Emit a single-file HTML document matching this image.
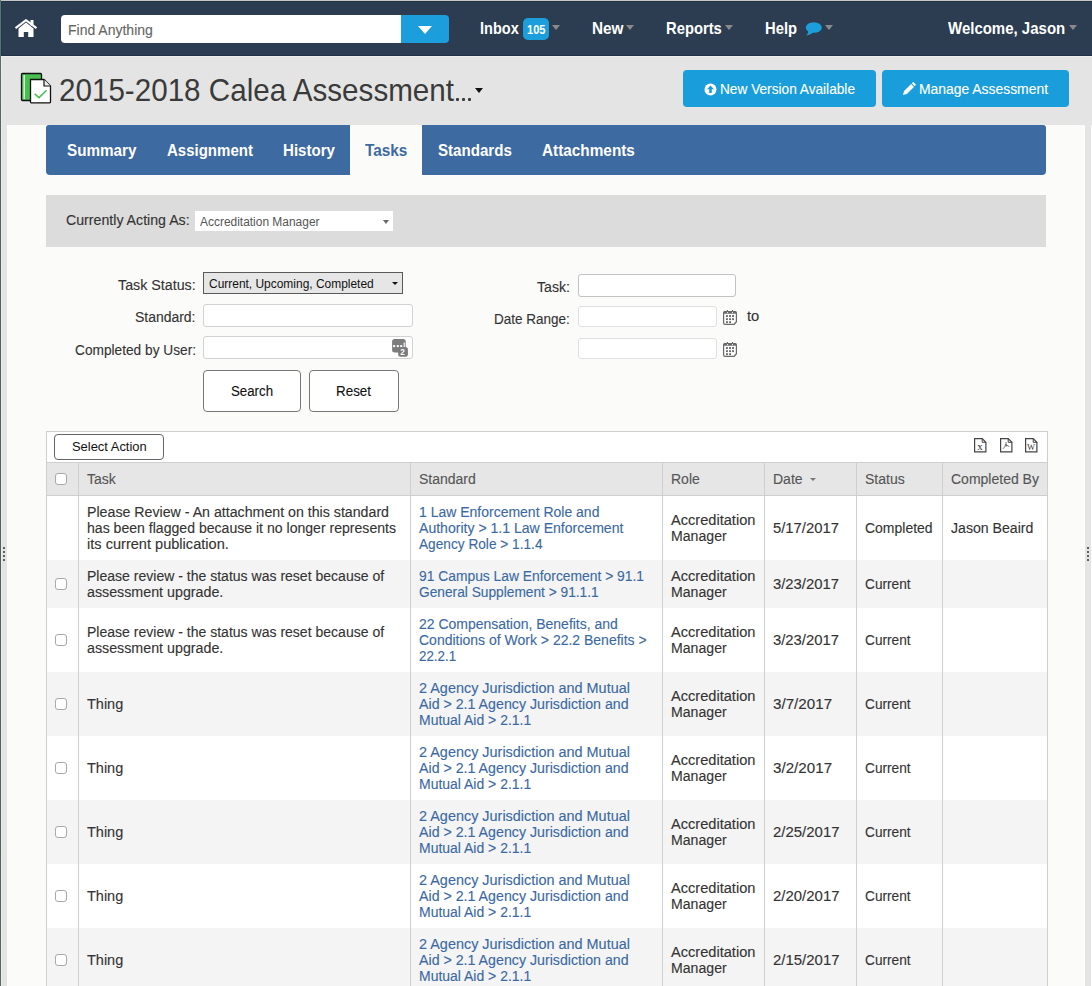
<!DOCTYPE html>
<html><head><meta charset="utf-8"><style>
*{box-sizing:border-box;margin:0;padding:0}
html,body{width:1092px;height:986px;overflow:hidden;background:#e4e4e4;font-family:"Liberation Sans",sans-serif;color:#333}
.a{position:absolute}
.t{position:absolute;white-space:nowrap;line-height:20px;transform-origin:0 0;-webkit-text-stroke:0.12px currentColor}
.caret{position:absolute;width:0;height:0;border-left:4px solid transparent;border-right:4px solid transparent;border-top:5px solid #8a8a8a}
.cb{position:absolute;width:12px;height:12px;border:1px solid #a9a9a9;border-radius:3px;background:#fff}
.dot{position:absolute;width:2px;height:2px;background:#606060}
</style></head><body>
<div class="a" style="left:0px;top:0px;width:1092px;height:1px;background:#c8c5c5"></div>
<div class="a" style="left:1px;top:1px;width:1091px;height:55px;background:#2c3d52"></div>
<div class="a" style="left:1px;top:1px;width:1091px;height:1px;background:#22344a"></div>
<div class="a" style="left:1px;top:55px;width:1091px;height:1px;background:#1f3047"></div>
<div class="a" style="left:1px;top:1px;width:1px;height:55px;background:#25374c"></div>
<div class="a" style="left:1px;top:56px;width:1091px;height:1px;background:#efeeee"></div>
<div class="a" style="left:1px;top:56px;width:1px;height:930px;background:#ebebeb"></div>
<div class="a" style="left:7px;top:125px;width:1078px;height:861px;background:#fbfbfa"></div>
<div class="a" style="left:1091px;top:125px;width:1px;height:861px;background:#fbfbfa"></div>
<div class="a" style="left:0px;top:0px;width:1px;height:986px;background:linear-gradient(#5b7a71,#4a6660 15%,#4b6560 85%,#566c60)"></div>
<svg class="a" style="left:14px;top:19px" width="24" height="19" viewBox="0 0 24 19">
<path d="M1.5 9.2 L12 1.2 L22.5 9.2" stroke="#fff" stroke-width="2.1" fill="none"/>
<path d="M16.5 1 h3 v5.5 h-3z" fill="#fff"/>
<path d="M4.5 9.5 L12 3.6 L19.5 9.5 V18 H14.2 V13 H9.8 V18 H4.5Z" fill="#fff"/></svg>
<div class="a" style="left:61px;top:15px;width:341px;height:28px;background:#fff;border-radius:4px 0 0 4px"></div>
<div class="t" style="left:68px;top:20px;font-size:14px;color:#666;">Find Anything</div>
<div class="a" style="left:401px;top:15px;width:48px;height:28px;background:#1b9edb;border-radius:0 4px 4px 0"></div>
<div class="a" style="left:417.5px;top:26px;width:0;height:0;border-left:7.5px solid transparent;border-right:7.5px solid transparent;border-top:8px solid #fff"></div>
<div class="t" style="left:480px;top:19px;font-size:17px;color:#fff;font-weight:bold;-webkit-text-stroke:0;transform:scaleX(0.8559);">Inbox</div>
<div class="a" style="left:523px;top:18px;width:26px;height:22px;background:#1b9edb;border-radius:5px"></div>
<div class="t" style="left:527px;top:20px;font-size:13px;color:#fff;font-weight:bold;-webkit-text-stroke:0;transform:scaleX(0.8529);">105</div>
<div class="caret" style="left:552px;top:25px"></div>
<div class="t" style="left:591.5px;top:19px;font-size:17px;color:#fff;font-weight:bold;-webkit-text-stroke:0;transform:scaleX(0.9012);">New</div>
<div class="caret" style="left:626px;top:25px"></div>
<div class="t" style="left:665.6px;top:19px;font-size:17px;color:#fff;font-weight:bold;-webkit-text-stroke:0;transform:scaleX(0.8687);">Reports</div>
<div class="caret" style="left:725px;top:25px"></div>
<div class="t" style="left:764.5px;top:19px;font-size:17px;color:#fff;font-weight:bold;-webkit-text-stroke:0;transform:scaleX(0.8686);">Help</div>
<svg class="a" style="left:805px;top:22px" width="17" height="14" viewBox="0 0 17 14"><ellipse cx="8.8" cy="5.5" rx="8" ry="5.3" fill="#1b9edb"/><path d="M3.5 8 Q3.5 12 1.2 13.8 Q6 13 8.5 10z" fill="#1b9edb"/></svg>
<div class="caret" style="left:825px;top:25px"></div>
<div class="t" style="left:948.4px;top:19px;font-size:17px;color:#fff;font-weight:bold;-webkit-text-stroke:0;transform:scaleX(0.8818);">Welcome, Jason</div>
<div class="caret" style="left:1069px;top:25px"></div>
<svg class="a" style="left:20px;top:72px" width="32" height="32" viewBox="0 0 32 32">
<rect x="1.5" y="1.5" width="20" height="27" rx="1" fill="#48bf50" stroke="#111" stroke-width="1.3"/>
<rect x="3.5" y="3" width="1.5" height="24" fill="#d9f3db"/>
<path d="M10.5 7.5 H24 L30.5 14 V30 Q30.5 30.8 29.7 30.8 H11.3 Q10.5 30.8 10.5 30 Z" fill="#fff" stroke="#111" stroke-width="1.3"/>
<path d="M24 7.5 V14 H30.5" fill="#eee" stroke="#111" stroke-width="1.2"/>
<path d="M14.7 21.8 L19 25.6 L26.6 18.2" stroke="#4cc152" stroke-width="1.6" fill="none"/></svg>
<div class="t" style="left:58.5px;top:80px;font-size:32px;color:#3a3a3a;-webkit-text-stroke:0;transform:scaleX(0.9252);">2015-2018 Calea Assessment</div>
<div class="a" style="left:455.8px;top:97.6px;width:3.3px;height:3.3px;background:#3a3a3a;border-radius:1px"></div>
<div class="a" style="left:461.6px;top:97.6px;width:3.3px;height:3.3px;background:#3a3a3a;border-radius:1px"></div>
<div class="a" style="left:467.9px;top:97.6px;width:3.3px;height:3.3px;background:#3a3a3a;border-radius:1px"></div>
<div class="a" style="left:474.5px;top:88px;width:0;height:0;border-left:4.25px solid transparent;border-right:4.25px solid transparent;border-top:5px solid #111"></div>
<div class="a" style="left:683px;top:70px;width:193px;height:37px;background:#1a9ddb;border-radius:4px"></div>
<svg class="a" style="left:704px;top:83px" width="13" height="13" viewBox="0 0 13 13"><circle cx="6.5" cy="6.5" r="6" fill="#fff"/><path d="M6.5 2.5 L10 6.3 H7.8 V10 H5.2 V6.3 H3z" fill="#1a9ddb"/></svg>
<div class="t" style="left:719.8px;top:79px;font-size:15px;color:#fff;transform:scaleX(0.9112);">New Version Available</div>
<div class="a" style="left:882px;top:70px;width:187px;height:37px;background:#1a9ddb;border-radius:4px"></div>
<svg class="a" style="left:902px;top:82px" width="14" height="14" viewBox="0 0 14 14"><g transform="rotate(45 7 7)"><path d="M5 -1 H9 V1 H5Z M5 2 H9 V12 L7 15.5 L5 12Z" fill="#fff"/></g></svg>
<div class="t" style="left:918.8px;top:79px;font-size:15px;color:#fff;transform:scaleX(0.9264);">Manage Assessment</div>
<div class="a" style="left:46px;top:125px;width:1000px;height:50px;background:#3d6aa1;border-radius:3px 3px 4px 4px"></div>
<div class="a" style="left:350px;top:125px;width:72px;height:50px;background:#fbfbfa"></div>
<div class="t" style="left:67px;top:141px;font-size:17px;color:#fff;font-weight:bold;-webkit-text-stroke:0;transform:scaleX(0.8970);">Summary</div>
<div class="t" style="left:166.8px;top:141px;font-size:17px;color:#fff;font-weight:bold;-webkit-text-stroke:0;transform:scaleX(0.8829);">Assignment</div>
<div class="t" style="left:283px;top:141px;font-size:17px;color:#fff;font-weight:bold;-webkit-text-stroke:0;transform:scaleX(0.8861);">History</div>
<div class="t" style="left:437.6px;top:141px;font-size:17px;color:#fff;font-weight:bold;-webkit-text-stroke:0;transform:scaleX(0.8877);">Standards</div>
<div class="t" style="left:541.6px;top:141px;font-size:17px;color:#fff;font-weight:bold;-webkit-text-stroke:0;transform:scaleX(0.9022);">Attachments</div>
<div class="t" style="left:365px;top:141px;font-size:17px;color:#3d6aa1;font-weight:bold;-webkit-text-stroke:0;transform:scaleX(0.9032);">Tasks</div>
<div class="a" style="left:46px;top:195px;width:1000px;height:52px;background:#dcdcdc"></div>
<div class="t" style="left:66.4px;top:210px;font-size:14px;color:#333;transform:scaleX(1.0117);">Currently Acting As:</div>
<div class="a" style="left:195px;top:211px;width:198px;height:20px;background:#fff"></div>
<div class="t" style="left:199.5px;top:212px;font-size:12px;color:#555;-webkit-text-stroke:0;transform:scaleX(0.9953);">Accreditation Manager</div>
<div class="a" style="left:382.5px;top:219.5px;width:0;height:0;border-left:3.0px solid transparent;border-right:3.0px solid transparent;border-top:4px solid #6a6a6a"></div>
<div class="t" style="left:117.99999999999999px;top:274.5px;font-size:14px;color:#333;transform:scaleX(1.0189);">Task Status:</div>
<div class="a" style="left:203px;top:272px;width:200px;height:22px;background:#e6e6e6;border:1px solid #5a5a5a"></div>
<div class="t" style="left:208.5px;top:274px;font-size:12px;color:#111;-webkit-text-stroke:0;transform:scaleX(0.9957);">Current, Upcoming, Completed</div>
<div class="a" style="left:391.5px;top:282px;width:0;height:0;border-left:3.0px solid transparent;border-right:3.0px solid transparent;border-top:3.5px solid #111"></div>
<div class="t" style="left:135.2px;top:307px;font-size:14px;color:#333;transform:scaleX(0.9965);">Standard:</div>
<div class="a" style="left:203px;top:304px;width:210px;height:23px;background:#fff;border:1px solid #d2d2d2;border-radius:3px"></div>
<div class="t" style="left:74.69999999999999px;top:339.5px;font-size:14px;color:#333;transform:scaleX(0.9780);">Completed by User:</div>
<div class="a" style="left:203px;top:336px;width:210px;height:23px;background:#fff;border:1px solid #d2d2d2;border-radius:3px"></div>
<svg class="a" style="left:391px;top:339px" width="18" height="19" viewBox="0 0 18 19">
<rect x="1.1" y="0.1" width="13.6" height="13.5" rx="2.5" fill="#7d7d7d"/>
<rect x="7.2" y="7.9" width="9.7" height="9.8" rx="2.5" fill="#7a7a7a"/>
<rect x="2.1" y="6.1" width="2" height="2" fill="#fff"/><rect x="5.8" y="6.1" width="2" height="2" fill="#fff"/><rect x="9.2" y="6.1" width="2" height="2" fill="#fff"/><rect x="12.6" y="3.5" width="1.3" height="4.6" fill="#eee"/>
<text x="11.6" y="16.2" font-size="8.2" font-weight="bold" fill="#fff" text-anchor="middle" font-family="Liberation Sans">2</text></svg>
<div class="a" style="left:203px;top:370px;width:98px;height:42px;background:#fff;border:1px solid #777;border-radius:4px"></div>
<div class="t" style="left:231px;top:381px;font-size:14px;color:#111;transform:scaleX(0.9468);">Search</div>
<div class="a" style="left:309px;top:370px;width:90px;height:42px;background:#fff;border:1px solid #777;border-radius:4px"></div>
<div class="t" style="left:336px;top:381px;font-size:14px;color:#111;transform:scaleX(0.9570);">Reset</div>
<div class="t" style="left:537px;top:277px;font-size:14px;color:#333;transform:scaleX(1.0099);">Task:</div>
<div class="a" style="left:578px;top:274px;width:158px;height:23px;background:#fff;border:1px solid #c2c2c2;border-radius:3px"></div>
<div class="t" style="left:494.3px;top:309px;font-size:14px;color:#333;transform:scaleX(0.9630);">Date Range:</div>
<div class="a" style="left:578px;top:306px;width:139px;height:21px;background:#fff;border:1px solid #e0e0e0;border-radius:3px"></div>
<div class="a" style="left:578px;top:338px;width:139px;height:21px;background:#fff;border:1px solid #e0e0e0;border-radius:3px"></div>
<div class="t" style="left:746.5px;top:306px;font-size:14px;color:#333;transform:scaleX(1.0535);">to</div>
<svg class="a" style="left:723px;top:310px" width="15" height="16" viewBox="0 0 15 16">
<path d="M2 1.6 H12 Q13.4 1.6 13.4 3 V11.8 L11.2 14.3 H2 Q0.6 14.3 0.6 12.9 V3 Q0.6 1.6 2 1.6Z" fill="#fff" stroke="#6a6a6a" stroke-width="1.2"/>
<rect x="0.6" y="1.3" width="12.8" height="2.5" rx="1" fill="#6a6a6a"/>
<rect x="4" y="0" width="1" height="2.2" fill="#6a6a6a"/><rect x="9" y="0" width="1" height="2.2" fill="#6a6a6a"/>
<circle cx="4.5" cy="2.6" r="0.6" fill="#fff"/><circle cx="9.5" cy="2.6" r="0.6" fill="#fff"/>
<path d="M13.4 11.4 L11 14.3 Q11.1 12.1 13.4 11.4Z" fill="#6a6a6a"/>
<g fill="#6a6a6a"><rect x="3" y="5.1" width="1.9" height="1.9"/><rect x="6.1" y="5.1" width="1.9" height="1.9"/><rect x="9.1" y="5.1" width="1.9" height="1.9"/>
<rect x="3" y="8.2" width="1.9" height="1.9"/><rect x="6.1" y="8.2" width="1.9" height="1.9"/><rect x="9.1" y="8.2" width="1.9" height="1.9"/>
<rect x="3" y="11.2" width="1.9" height="1.9"/><rect x="6.1" y="11.2" width="1.9" height="1.9"/></g></svg>
<svg class="a" style="left:723px;top:342px" width="15" height="16" viewBox="0 0 15 16">
<path d="M2 1.6 H12 Q13.4 1.6 13.4 3 V11.8 L11.2 14.3 H2 Q0.6 14.3 0.6 12.9 V3 Q0.6 1.6 2 1.6Z" fill="#fff" stroke="#6a6a6a" stroke-width="1.2"/>
<rect x="0.6" y="1.3" width="12.8" height="2.5" rx="1" fill="#6a6a6a"/>
<rect x="4" y="0" width="1" height="2.2" fill="#6a6a6a"/><rect x="9" y="0" width="1" height="2.2" fill="#6a6a6a"/>
<circle cx="4.5" cy="2.6" r="0.6" fill="#fff"/><circle cx="9.5" cy="2.6" r="0.6" fill="#fff"/>
<path d="M13.4 11.4 L11 14.3 Q11.1 12.1 13.4 11.4Z" fill="#6a6a6a"/>
<g fill="#6a6a6a"><rect x="3" y="5.1" width="1.9" height="1.9"/><rect x="6.1" y="5.1" width="1.9" height="1.9"/><rect x="9.1" y="5.1" width="1.9" height="1.9"/>
<rect x="3" y="8.2" width="1.9" height="1.9"/><rect x="6.1" y="8.2" width="1.9" height="1.9"/><rect x="9.1" y="8.2" width="1.9" height="1.9"/>
<rect x="3" y="11.2" width="1.9" height="1.9"/><rect x="6.1" y="11.2" width="1.9" height="1.9"/></g></svg>
<div class="a" style="left:46px;top:431px;width:1002px;height:561px;background:#fff;border:1px solid #cfcfcf"></div>
<div class="a" style="left:54px;top:434px;width:110px;height:26px;background:#fff;border:1px solid #666;border-radius:4px"></div>
<div class="t" style="left:71.5px;top:437px;font-size:13px;color:#111;-webkit-text-stroke:0;transform:scaleX(0.9939);">Select Action</div>
<svg class="a" style="left:974px;top:437.5px" width="13" height="15" viewBox="0 0 13 15"><path d="M0.6 0.6 H8.2 L11.9 4.3 V13.9 H0.6Z" fill="#fff" stroke="#444" stroke-width="1.2"/><path d="M8.2 0.6 V4.3 H11.9" fill="none" stroke="#444" stroke-width="1"/><text x="6.1" y="11.8" font-size="11" fill="#333" text-anchor="middle" font-family="Liberation Serif">x</text></svg>
<svg class="a" style="left:999.5px;top:437.5px" width="13" height="15" viewBox="0 0 13 15"><path d="M0.6 0.6 H8.2 L11.9 4.3 V13.9 H0.6Z" fill="#fff" stroke="#444" stroke-width="1.2"/><path d="M8.2 0.6 V4.3 H11.9" fill="none" stroke="#444" stroke-width="1"/><path d="M6 4 V7.2 M6 7.2 L3 10.8 M6 7.2 L9.3 8.4" fill="none" stroke="#555" stroke-width="0.8"/><circle cx="6" cy="7.3" r="0.9" fill="none" stroke="#555" stroke-width="0.6"/></svg>
<svg class="a" style="left:1025px;top:437.5px" width="13" height="15" viewBox="0 0 13 15"><path d="M0.6 0.6 H8.2 L11.9 4.3 V13.9 H0.6Z" fill="#fff" stroke="#444" stroke-width="1.2"/><path d="M8.2 0.6 V4.3 H11.9" fill="none" stroke="#444" stroke-width="1"/><text x="6.1" y="11.6" font-size="8.5" fill="#333" text-anchor="middle" font-family="Liberation Serif">W</text></svg>
<div class="a" style="left:47px;top:462px;width:1000px;height:34px;background:#e6e6e6;border-top:1px solid #cfcfcf;border-bottom:1px solid #cfcfcf"></div>
<div class="a" style="left:47px;top:496px;width:1000px;height:64px;background:#fff"></div>
<div class="a" style="left:47px;top:560px;width:1000px;height:48px;background:#f4f4f4"></div>
<div class="a" style="left:47px;top:608px;width:1000px;height:64px;background:#fff"></div>
<div class="a" style="left:47px;top:672px;width:1000px;height:64px;background:#f4f4f4"></div>
<div class="a" style="left:47px;top:736px;width:1000px;height:64px;background:#fff"></div>
<div class="a" style="left:47px;top:800px;width:1000px;height:64px;background:#f4f4f4"></div>
<div class="a" style="left:47px;top:864px;width:1000px;height:64px;background:#fff"></div>
<div class="a" style="left:47px;top:928px;width:1000px;height:64px;background:#f4f4f4"></div>
<div class="a" style="left:78px;top:462px;width:1px;height:530px;background:#cfcfcf"></div>
<div class="a" style="left:410px;top:462px;width:1px;height:530px;background:#cfcfcf"></div>
<div class="a" style="left:662px;top:462px;width:1px;height:530px;background:#cfcfcf"></div>
<div class="a" style="left:764px;top:462px;width:1px;height:530px;background:#cfcfcf"></div>
<div class="a" style="left:856px;top:462px;width:1px;height:530px;background:#cfcfcf"></div>
<div class="a" style="left:942px;top:462px;width:1px;height:530px;background:#cfcfcf"></div>
<div class="cb" style="left:55px;top:473px"></div>
<div class="t" style="left:87px;top:469px;font-size:14px;color:#555;">Task</div>
<div class="t" style="left:419px;top:469px;font-size:14px;color:#555;">Standard</div>
<div class="t" style="left:671px;top:469px;font-size:14px;color:#555;">Role</div>
<div class="t" style="left:773px;top:469px;font-size:14px;color:#555;">Date</div>
<div class="t" style="left:865px;top:469px;font-size:14px;color:#555;">Status</div>
<div class="t" style="left:951px;top:469px;font-size:14px;color:#555;">Completed By</div>
<div class="a" style="left:809.5px;top:478px;width:0;height:0;border-left:3.0px solid transparent;border-right:3.0px solid transparent;border-top:3.5px solid #777"></div>
<div class="t" style="left:87px;top:502px;font-size:14px;color:#333;transform:scaleX(1.0132);">Please Review - An attachment on this standard</div>
<div class="t" style="left:87px;top:518px;font-size:14px;color:#333;transform:scaleX(1.0051);">has been flagged because it no longer represents</div>
<div class="t" style="left:87px;top:534px;font-size:14px;color:#333;transform:scaleX(1.0413);">its current publication.</div>
<div class="t" style="left:419px;top:502px;font-size:14px;color:#3b69a3;transform:scaleX(0.9992);">1 Law Enforcement Role and</div>
<div class="t" style="left:419px;top:518px;font-size:14px;color:#3b69a3;transform:scaleX(1.0044);">Authority &gt; 1.1 Law Enforcement</div>
<div class="t" style="left:419px;top:534px;font-size:14px;color:#3b69a3;transform:scaleX(0.9765);">Agency Role &gt; 1.1.4</div>
<div class="t" style="left:671px;top:510px;font-size:14px;color:#333;transform:scaleX(1.0429);">Accreditation</div>
<div class="t" style="left:671px;top:526px;font-size:14px;color:#333;transform:scaleX(1.0080);">Manager</div>
<div class="t" style="left:773px;top:518px;font-size:14px;color:#333;transform:scaleX(1.0597);">5/17/2017</div>
<div class="t" style="left:865px;top:518px;font-size:14px;color:#333;transform:scaleX(0.9985);">Completed</div>
<div class="t" style="left:951px;top:518px;font-size:14px;color:#333;transform:scaleX(1.0084);">Jason Beaird</div>
<div class="cb" style="left:55px;top:578px"></div>
<div class="t" style="left:87px;top:566px;font-size:14px;color:#333;transform:scaleX(1.0021);">Please review - the status was reset because of</div>
<div class="t" style="left:87px;top:582px;font-size:14px;color:#333;transform:scaleX(1.0183);">assessment upgrade.</div>
<div class="t" style="left:419px;top:566px;font-size:14px;color:#3b69a3;transform:scaleX(0.9884);">91 Campus Law Enforcement &gt; 91.1</div>
<div class="t" style="left:419px;top:582px;font-size:14px;color:#3b69a3;transform:scaleX(0.9804);">General Supplement &gt; 91.1.1</div>
<div class="t" style="left:671px;top:566px;font-size:14px;color:#333;transform:scaleX(1.0429);">Accreditation</div>
<div class="t" style="left:671px;top:582px;font-size:14px;color:#333;transform:scaleX(1.0080);">Manager</div>
<div class="t" style="left:773px;top:574px;font-size:14px;color:#333;transform:scaleX(1.0597);">3/23/2017</div>
<div class="t" style="left:865px;top:574px;font-size:14px;color:#333;transform:scaleX(0.9770);">Current</div>
<div class="cb" style="left:55px;top:634px"></div>
<div class="t" style="left:87px;top:622px;font-size:14px;color:#333;transform:scaleX(1.0021);">Please review - the status was reset because of</div>
<div class="t" style="left:87px;top:638px;font-size:14px;color:#333;transform:scaleX(1.0183);">assessment upgrade.</div>
<div class="t" style="left:419px;top:614px;font-size:14px;color:#3b69a3;transform:scaleX(0.9978);">22 Compensation, Benefits, and</div>
<div class="t" style="left:419px;top:630px;font-size:14px;color:#3b69a3;transform:scaleX(0.9993);">Conditions of Work &gt; 22.2 Benefits &gt;</div>
<div class="t" style="left:419px;top:646px;font-size:14px;color:#3b69a3;transform:scaleX(0.9534);">22.2.1</div>
<div class="t" style="left:671px;top:622px;font-size:14px;color:#333;transform:scaleX(1.0429);">Accreditation</div>
<div class="t" style="left:671px;top:638px;font-size:14px;color:#333;transform:scaleX(1.0080);">Manager</div>
<div class="t" style="left:773px;top:630px;font-size:14px;color:#333;transform:scaleX(1.0597);">3/23/2017</div>
<div class="t" style="left:865px;top:630px;font-size:14px;color:#333;transform:scaleX(0.9770);">Current</div>
<div class="cb" style="left:55px;top:698px"></div>
<div class="t" style="left:87px;top:694px;font-size:14px;color:#333;transform:scaleX(1.0340);">Thing</div>
<div class="t" style="left:419px;top:678px;font-size:14px;color:#3b69a3;transform:scaleX(1.0304);">2 Agency Jurisdiction and Mutual</div>
<div class="t" style="left:419px;top:694px;font-size:14px;color:#3b69a3;transform:scaleX(1.0144);">Aid &gt; 2.1 Agency Jurisdiction and</div>
<div class="t" style="left:419px;top:710px;font-size:14px;color:#3b69a3;transform:scaleX(0.9977);">Mutual Aid &gt; 2.1.1</div>
<div class="t" style="left:671px;top:686px;font-size:14px;color:#333;transform:scaleX(1.0429);">Accreditation</div>
<div class="t" style="left:671px;top:702px;font-size:14px;color:#333;transform:scaleX(1.0080);">Manager</div>
<div class="t" style="left:773px;top:694px;font-size:14px;color:#333;transform:scaleX(1.0846);">3/7/2017</div>
<div class="t" style="left:865px;top:694px;font-size:14px;color:#333;transform:scaleX(0.9770);">Current</div>
<div class="cb" style="left:55px;top:762px"></div>
<div class="t" style="left:87px;top:758px;font-size:14px;color:#333;transform:scaleX(1.0340);">Thing</div>
<div class="t" style="left:419px;top:742px;font-size:14px;color:#3b69a3;transform:scaleX(1.0304);">2 Agency Jurisdiction and Mutual</div>
<div class="t" style="left:419px;top:758px;font-size:14px;color:#3b69a3;transform:scaleX(1.0144);">Aid &gt; 2.1 Agency Jurisdiction and</div>
<div class="t" style="left:419px;top:774px;font-size:14px;color:#3b69a3;transform:scaleX(0.9977);">Mutual Aid &gt; 2.1.1</div>
<div class="t" style="left:671px;top:750px;font-size:14px;color:#333;transform:scaleX(1.0429);">Accreditation</div>
<div class="t" style="left:671px;top:766px;font-size:14px;color:#333;transform:scaleX(1.0080);">Manager</div>
<div class="t" style="left:773px;top:758px;font-size:14px;color:#333;transform:scaleX(1.0846);">3/2/2017</div>
<div class="t" style="left:865px;top:758px;font-size:14px;color:#333;transform:scaleX(0.9770);">Current</div>
<div class="cb" style="left:55px;top:826px"></div>
<div class="t" style="left:87px;top:822px;font-size:14px;color:#333;transform:scaleX(1.0340);">Thing</div>
<div class="t" style="left:419px;top:806px;font-size:14px;color:#3b69a3;transform:scaleX(1.0304);">2 Agency Jurisdiction and Mutual</div>
<div class="t" style="left:419px;top:822px;font-size:14px;color:#3b69a3;transform:scaleX(1.0144);">Aid &gt; 2.1 Agency Jurisdiction and</div>
<div class="t" style="left:419px;top:838px;font-size:14px;color:#3b69a3;transform:scaleX(0.9977);">Mutual Aid &gt; 2.1.1</div>
<div class="t" style="left:671px;top:814px;font-size:14px;color:#333;transform:scaleX(1.0429);">Accreditation</div>
<div class="t" style="left:671px;top:830px;font-size:14px;color:#333;transform:scaleX(1.0080);">Manager</div>
<div class="t" style="left:773px;top:822px;font-size:14px;color:#333;transform:scaleX(1.0678);">2/25/2017</div>
<div class="t" style="left:865px;top:822px;font-size:14px;color:#333;transform:scaleX(0.9770);">Current</div>
<div class="cb" style="left:55px;top:890px"></div>
<div class="t" style="left:87px;top:886px;font-size:14px;color:#333;transform:scaleX(1.0340);">Thing</div>
<div class="t" style="left:419px;top:870px;font-size:14px;color:#3b69a3;transform:scaleX(1.0304);">2 Agency Jurisdiction and Mutual</div>
<div class="t" style="left:419px;top:886px;font-size:14px;color:#3b69a3;transform:scaleX(1.0144);">Aid &gt; 2.1 Agency Jurisdiction and</div>
<div class="t" style="left:419px;top:902px;font-size:14px;color:#3b69a3;transform:scaleX(0.9977);">Mutual Aid &gt; 2.1.1</div>
<div class="t" style="left:671px;top:878px;font-size:14px;color:#333;transform:scaleX(1.0429);">Accreditation</div>
<div class="t" style="left:671px;top:894px;font-size:14px;color:#333;transform:scaleX(1.0080);">Manager</div>
<div class="t" style="left:773px;top:886px;font-size:14px;color:#333;transform:scaleX(1.0678);">2/20/2017</div>
<div class="t" style="left:865px;top:886px;font-size:14px;color:#333;transform:scaleX(0.9770);">Current</div>
<div class="cb" style="left:55px;top:954px"></div>
<div class="t" style="left:87px;top:950px;font-size:14px;color:#333;transform:scaleX(1.0340);">Thing</div>
<div class="t" style="left:419px;top:934px;font-size:14px;color:#3b69a3;transform:scaleX(1.0304);">2 Agency Jurisdiction and Mutual</div>
<div class="t" style="left:419px;top:950px;font-size:14px;color:#3b69a3;transform:scaleX(1.0144);">Aid &gt; 2.1 Agency Jurisdiction and</div>
<div class="t" style="left:419px;top:966px;font-size:14px;color:#3b69a3;transform:scaleX(0.9977);">Mutual Aid &gt; 2.1.1</div>
<div class="t" style="left:671px;top:942px;font-size:14px;color:#333;transform:scaleX(1.0429);">Accreditation</div>
<div class="t" style="left:671px;top:958px;font-size:14px;color:#333;transform:scaleX(1.0080);">Manager</div>
<div class="t" style="left:773px;top:950px;font-size:14px;color:#333;transform:scaleX(1.0678);">2/15/2017</div>
<div class="t" style="left:865px;top:950px;font-size:14px;color:#333;transform:scaleX(0.9770);">Current</div>
<div class="dot" style="left:3px;top:547px"></div>
<div class="dot" style="left:3px;top:551px"></div>
<div class="dot" style="left:3px;top:555px"></div>
<div class="dot" style="left:3px;top:559px"></div>
<div class="dot" style="left:1087px;top:547px"></div>
<div class="dot" style="left:1087px;top:551px"></div>
<div class="dot" style="left:1087px;top:555px"></div>
<div class="dot" style="left:1087px;top:559px"></div>
</body></html>
